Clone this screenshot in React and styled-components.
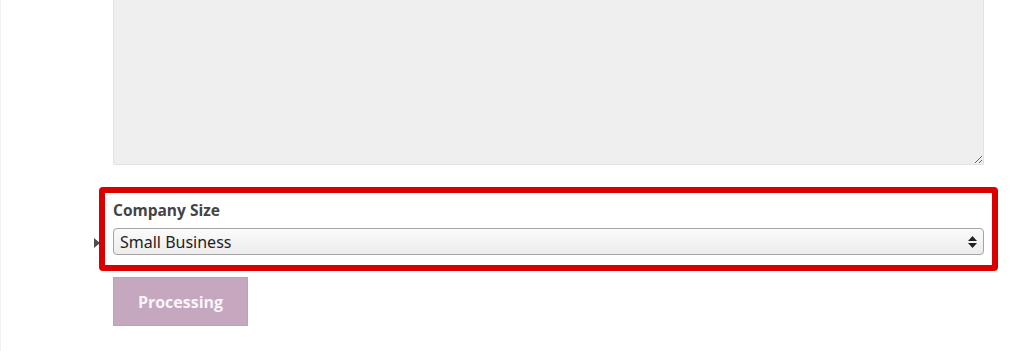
import React from "react";
import styled, { createGlobalStyle } from "styled-components";

const GlobalStyle = createGlobalStyle`
  html, body {
    margin: 0;
    padding: 0;
    background: #fff;
  }
  body {
    font-family: "Open Sans", "Noto Sans", "Liberation Sans", sans-serif;
    overflow: hidden;
  }
`;

const Page = styled.div`
  width: 1024px;
  height: 351px;
  box-sizing: border-box;
  border-left: 1px solid #f0f0f0;
  position: relative;
`;

const Form = styled.form`
  width: 871px;
  margin-left: 112px;
  display: flex;
  flex-direction: column;
`;

const Message = styled.textarea`
  display: block;
  width: 100%;
  height: 165px;
  box-sizing: border-box;
  margin: 0;
  background: #efefef;
  border: 1px solid #e2e2e2;
  border-top: none;
  border-radius: 0 0 2px 2px;
  resize: both;
  outline: none;
`;

const Highlight = styled.div`
  margin: 22px -14px 0;
  padding: 7px 8px 10px;
  border: 6px solid #da0000;
  border-radius: 4px;
  display: flex;
  flex-direction: column;
`;

const Label = styled.label`
  font-weight: 700;
  font-size: 15.5px;
  line-height: 20px;
  color: #444;
  margin-bottom: 8px;
`;

const SelectWrap = styled.div`
  position: relative;
`;

const Select = styled.select`
  appearance: none;
  -webkit-appearance: none;
  width: 100%;
  height: 27px;
  box-sizing: border-box;
  padding: 0 24px 0 6px;
  font-family: "Noto Sans", "DejaVu Sans", sans-serif;
  font-size: 16px;
  color: #222;
  background: linear-gradient(#fbfbfb, #ececec);
  border: 1px solid #a4a4a4;
  border-radius: 4px;
  outline: none;
`;

const Arrows = styled.svg`
  position: absolute;
  right: 7px;
  top: 8px;
  pointer-events: none;
`;

const Cursor = styled.span`
  position: absolute;
  left: 93px;
  top: 238px;
  width: 0;
  height: 0;
  border-top: 5px solid transparent;
  border-bottom: 5px solid transparent;
  border-left: 6px solid #222;
  opacity: 0.8;
`;

const Button = styled.button`
  align-self: flex-start;
  margin-top: 6px;
  width: 135px;
  height: 49px;
  background: #c6a7c0;
  border: 1px solid #bfa0b9;
  color: #fbf5f9;
  font-family: "Open Sans", "Noto Sans", sans-serif;
  font-weight: 700;
  font-size: 16px;
  cursor: default;
`;

export default function App() {
  return (
    <Page>
      <GlobalStyle />
      <Form onSubmit={e => e.preventDefault()}>
        <Message />
        <Highlight>
          <Label htmlFor="company-size">Company Size</Label>
          <SelectWrap>
            <Select id="company-size" defaultValue="small">
              <option value="small">Small Business</option>
              <option value="medium">Medium Business</option>
              <option value="enterprise">Enterprise</option>
            </Select>
            <Arrows width="9" height="12" viewBox="0 0 9 12">
              <path d="M4.5 0 L9 5 L0 5 Z" fill="#222" />
              <path d="M0 7 L9 7 L4.5 12 Z" fill="#222" />
            </Arrows>
          </SelectWrap>
        </Highlight>
        <Button type="button" disabled>Processing</Button>
      </Form>
      <Cursor />
    </Page>
  );
}
